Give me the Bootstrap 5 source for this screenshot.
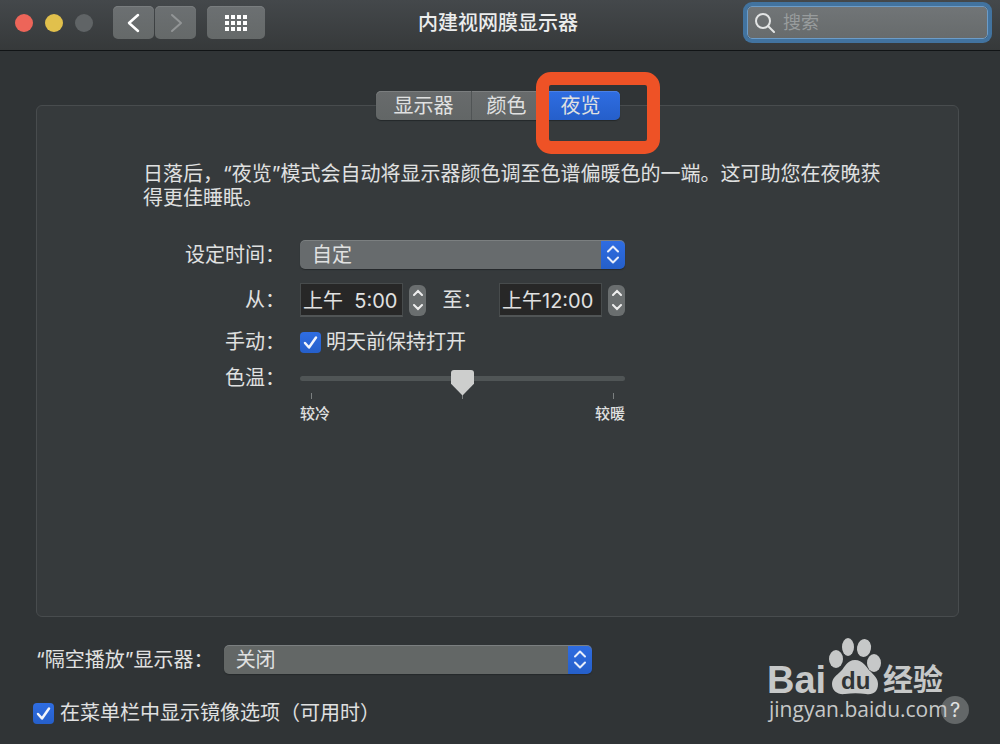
<!DOCTYPE html>
<html lang="zh-CN" data-bs-theme="dark">
<head>
<meta charset="utf-8">
<meta name="viewport" content="width=device-width, initial-scale=1">
<title>内建视网膜显示器</title>
<link rel="stylesheet" href="https://cdn.jsdelivr.net/npm/bootstrap@5.3.0/dist/css/bootstrap.min.css">
<style>
:root { --blue-fill: linear-gradient(#2f6de2, #255fca); }
body { font: 20px/24px Inter, "Noto Sans CJK SC", sans-serif; color: #e0e1e1; background: #303436; }
button, input, select { font: inherit; color: inherit; }

/* Title bar */
.titlebar { display: grid; grid-template-columns: 1fr auto 1fr; align-items: start; padding: 6px 12px 9px 8px; background: linear-gradient(#44484b, #36393a); border-bottom: 1px solid #111416; }
.window-title { font-size: 20px; line-height: 35px; font-weight: 500; color: #eceded; }
.lights { gap: 12px; margin: 0 20px 0 7px; }
.light { width: 18px; height: 18px; padding: 0; border: 0; border-radius: 50%; }
.light-close { background: #ed6559; }
.light-min { background: #e1c04c; }
.light-zoom { background: #606466; }
.tool { display: flex; align-items: center; justify-content: center; width: 41px; height: 33px; padding: 0; border: 0; border-radius: 5px; background: linear-gradient(#6c7072, #656969); box-shadow: inset 0 1px #797d7f; color: #fff; }
.tool:disabled { color: #929596; }
.tool-pair { gap: 1px; }
.tool-grid { width: 58px; margin-left: 11px; }
.searchbox { width: 241px; height: 33px; padding: 0 7px; border: 1px solid #6c9cc8; border-radius: 5px; background: linear-gradient(#717577, #676b6c); box-shadow: 0 0 0 4px #42739f; }
.searchbox input { min-width: 0; padding: 0; border: 0; outline: 0; background: none; font-size: 18px; }
.searchbox input::placeholder { color: #989c9d; opacity: 1; }

/* Settings panel */
.content-area { padding: 54px 41px 14px 36px; }
.pane { border: 1px solid #484c4e; border-radius: 6px; background: #363a3c; }
.tabs { height: 29px; margin-top: -15px; box-shadow: 0 1px 1px #24282a; border-radius: 5px; }
.tab { padding: 0 15px; border: 0; background: linear-gradient(#686b6c, #626666); box-shadow: inset 0 1px #7b7e7f; }
.tab:first-child { padding: 0 17px 0 18px; border-right: 1px solid #505455; border-radius: 5px 0 0 5px; }
.tab:last-child { padding: 0 19px; border-radius: 0 5px 5px 0; background: var(--blue-fill); box-shadow: inset 0 1px #4a80e6; }
.marker { position: absolute; top: -19px; left: -6px; width: 124px; height: 82px; border: 13px solid #ee5226; border-radius: 15px; pointer-events: none; }
.intro { max-width: 848px; margin: 42px 0 0; padding-left: 106px; }
.settings { display: grid; grid-template-columns: 248px minmax(0, 325px); column-gap: 15px; margin-top: 30px; }
.settings > :nth-child(odd) { text-align: right; }
.line { display: flex; align-items: center; justify-content: flex-end; }
.line-control { justify-content: flex-start; }
.h-select { height: 29px; }
.h-time { height: 62px; }
.h-check { height: 22px; }
.h-slide { height: 50px; }

.picker { height: 29px; padding: 0 36px 0 12px; border: 0; border-radius: 5px; appearance: none; box-shadow: 0 1px 1px #25292b, inset 0 1px #7b7f80;
  background: url("data:image/svg+xml,%3Csvg xmlns='http://www.w3.org/2000/svg' width='24' height='29' fill='none' stroke='%23e8eefb' stroke-width='2' stroke-linecap='round' stroke-linejoin='round'%3E%3Cpath d='M7 11.500l5-5 5 5M7 17.500l5 5 5-5'/%3E%3C/svg%3E") right / 24px 29px no-repeat, var(--blue-fill) right / 24px 29px no-repeat, #676b6d; }
.picker option { background: #505456; }
.timefield { width: 103px; height: 34px; padding: 0 2px; border: 1px solid #474b4c; border-bottom: 2px solid #505455; background: #272727; white-space: pre; }
.stepper { width: 17px; height: 31px; border-radius: 6px; background: #6a6e6f; overflow: hidden; }
.stepper button { display: flex; flex: 1; align-items: center; justify-content: center; padding: 0; border: 0; background: none; }
.tick-box { appearance: none; flex: none; width: 21px; height: 21px; margin: 0; border-radius: 4px; background: #676b6d; }
.tick-box:checked { background: url("data:image/svg+xml,%3Csvg xmlns='http://www.w3.org/2000/svg' viewBox='0 0 21 21' fill='none' stroke='%23f2f5fc' stroke-width='2.500' stroke-linecap='round' stroke-linejoin='round'%3E%3Cpath d='M5 11l4 4.500 7-10'/%3E%3C/svg%3E"), var(--blue-fill); }

.temp-control { padding-top: 12px; }
.temp { appearance: none; display: block; width: 100%; height: 26px; margin: 0; background: none; }
.temp::-webkit-slider-runnable-track { height: 5px; border-radius: 3px; background: #505556; }
.temp::-webkit-slider-thumb { appearance: none; width: 23px; height: 26px; margin-top: -6px; background: #cdcecd; border-radius: 3px; clip-path: polygon(0 0, 100% 0, 100% 55%, 50% 100%, 0 55%); }
.ticks { height: 6px; margin-top: 2px; padding: 0 11px; }
.ticks span { width: 1px; background: #7b7f80; }
.ends { padding-top: 5px; font-size: 15px; font-weight: 500; line-height: 20px; }

/* Bottom area */
.airplay-row { gap: 10px; margin-top: 28px; }
.airplay { width: 368px; background-color: #636766; }
.mirror-row { margin: 22px -10px 0 -3px; }
.help { width: 28px; height: 28px; margin-bottom: 6px; padding: 0; border: 0; border-radius: 50%; background: #636768; line-height: 28px; }
.brand { position: absolute; right: 20px; bottom: 3px; width: 184px; height: 92px; color: #c6c8c8; overflow: visible; pointer-events: none; }
</style>
</head>
<body class="d-flex flex-column min-vh-100">
<header class="titlebar">
  <div class="d-flex align-items-center">
    <div class="lights d-flex">
      <button class="light light-close" aria-label="关闭"></button>
      <button class="light light-min" aria-label="最小化"></button>
      <button class="light light-zoom" aria-label="缩放" disabled></button>
    </div>
    <div class="tool-pair d-flex">
      <button class="tool" aria-label="后退"><svg width="14" height="22" fill="none" stroke="currentColor" stroke-width="2.500" stroke-linecap="round" stroke-linejoin="round"><path d="M11 3L2 11l9 8"/></svg></button>
      <button class="tool" aria-label="前进" disabled><svg width="14" height="22" fill="none" stroke="currentColor" stroke-width="2" stroke-linecap="round" stroke-linejoin="round"><path d="M3 3l9 8-9 8"/></svg></button>
    </div>
    <button class="tool tool-grid" aria-label="显示全部"><svg width="22" height="16" stroke="currentColor" stroke-width="4" stroke-dasharray="4 2"><path d="M0 2h22M0 8h22M0 14h22"/></svg></button>
  </div>
  <h1 class="window-title m-0">内建视网膜显示器</h1>
  <label class="searchbox d-flex align-items-center gap-2 ms-auto">
    <svg class="flex-shrink-0" width="20" height="20" fill="none" stroke="#e3e5e5" stroke-width="2" stroke-linecap="round"><circle cx="8" cy="8" r="7"/><path d="M13 13l6 6"/></svg>
    <input class="flex-grow-1" type="search" placeholder="搜索" aria-label="搜索">
  </label>
</header>

<main class="content-area d-flex flex-column flex-grow-1">
  <section class="pane flex-grow-1">
    <div class="d-flex justify-content-center">
      <div class="tabs d-flex" role="tablist">
        <button class="tab" role="tab">显示器</button>
        <button class="tab" role="tab">颜色</button>
        <button class="tab position-relative" role="tab" aria-selected="true">夜览<span class="marker"></span></button>
      </div>
    </div>
    <p class="intro">日落后，“夜览”模式会自动将显示器颜色调至色谱偏暖色的一端。这可助您在夜晚获得更佳睡眠。</p>
    <div class="settings">
      <label class="line h-select" for="schedule">设定时间：</label>
      <select class="picker w-100" id="schedule"><option>自定</option></select>

      <label class="line h-time" for="from">从：</label>
      <div class="line line-control h-time justify-content-between">
        <div class="d-flex align-items-center" style="gap:6px">
          <input class="timefield" id="from" value="上午  5:00">
          <div class="stepper d-flex flex-column">
            <button aria-label="增加"><svg width="10" height="7" fill="none" stroke="#eee" stroke-width="2" stroke-linecap="round"><path d="M1 6l4-4 4 4"/></svg></button>
            <button aria-label="减少"><svg width="10" height="7" fill="none" stroke="#eee" stroke-width="2" stroke-linecap="round"><path d="M1 1l4 4 4-4"/></svg></button>
          </div>
        </div>
        <label for="to">至：</label>
        <div class="d-flex align-items-center" style="gap:6px">
          <input class="timefield" id="to" value="上午12:00">
          <div class="stepper d-flex flex-column">
            <button aria-label="增加"><svg width="10" height="7" fill="none" stroke="#eee" stroke-width="2" stroke-linecap="round"><path d="M1 6l4-4 4 4"/></svg></button>
            <button aria-label="减少"><svg width="10" height="7" fill="none" stroke="#eee" stroke-width="2" stroke-linecap="round"><path d="M1 1l4 4 4-4"/></svg></button>
          </div>
        </div>
      </div>

      <label class="line h-check" for="manual">手动：</label>
      <div class="line line-control h-check" style="gap:5px">
        <input class="tick-box" type="checkbox" id="manual" checked>
        <label for="manual">明天前保持打开</label>
      </div>

      <label class="line h-slide" for="temp">色温：</label>
      <div class="temp-control">
        <input class="temp" type="range" id="temp" min="0" max="100" value="50">
        <div class="ticks d-flex justify-content-between"><span></span><span></span><span></span></div>
        <div class="ends d-flex justify-content-between"><span>较冷</span><span>较暖</span></div>
      </div>
    </div>
  </section>

  <div class="airplay-row d-flex align-items-center">
    <label for="airplay">“隔空播放”显示器：</label>
    <select class="picker airplay" id="airplay"><option>关闭</option></select>
  </div>
  <footer class="mirror-row position-relative d-flex align-items-center justify-content-between">
    <div class="d-flex align-items-center" style="gap:6px">
      <input class="tick-box" type="checkbox" id="mirror" checked>
      <label for="mirror">在菜单栏中显示镜像选项（可用时）</label>
    </div>
    <button class="help" aria-label="帮助">?</button>
    <svg class="brand" viewBox="0 0 184 92" fill="currentColor" role="img" aria-label="Baidu 经验">
      <ellipse cx="71" cy="24" rx="7" ry="9"/>
      <ellipse cx="83" cy="12" rx="6" ry="9"/>
      <ellipse cx="99" cy="13" rx="7" ry="9" transform="rotate(10 99 13)"/>
      <ellipse cx="109" cy="28" rx="7" ry="9"/>
      <path d="M90 25c8 0 11 7 15 11 5 5 8 8 8 13 0 8-5 11-12 10-7-1-14-1-21 0-7 1-13-3-13-10 0-6 5-9 9-13s6-11 14-11z"/>
      <g font-family="Liberation Sans, sans-serif" font-weight="700">
        <text x="2" y="58" font-size="38">Bai</text>
        <text x="76" y="54" font-size="24" fill="#303436">du</text>
      </g>
      <text x="118" y="55" font-family="Noto Sans CJK SC, sans-serif" font-weight="700" font-size="30">经验</text>
      <text x="4" y="82" font-family="Open Sans, sans-serif" font-size="21" font-weight="500">jingyan.baidu.com</text>
    </svg>
  </footer>
</main>
<script src="https://cdn.jsdelivr.net/npm/bootstrap@5.3.0/dist/js/bootstrap.bundle.min.js"></script>
</body>
</html>
